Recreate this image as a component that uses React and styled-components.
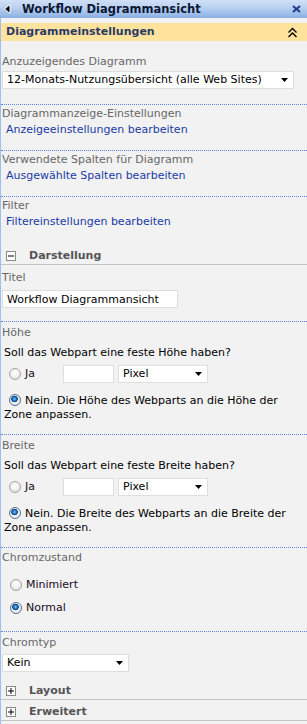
import styled, { createGlobalStyle } from 'styled-components';

const GlobalStyle = createGlobalStyle`
  html, body {
    margin: 0;
    padding: 0;
    background: #f2f2f2;
  }
  body {
    font-family: "DejaVu Sans", Verdana, sans-serif;
    font-size: 11px;
  }
`;

function ArrowDown() {
  return (
    <svg width="7" height="4" viewBox="0 0 7 4">
      <polygon points="0,0 7,0 3.5,4" fill="#000" />
    </svg>
  );
}

function Select({ value, width, inRow }) {
  return (
    <SelectBox $width={width} $inRow={inRow}>
      <span>{value}</span>
      <ArrowDown />
    </SelectBox>
  );
}

function Radio({ checked, children }) {
  return (
    <RadioLabel>
      <RadioDot $checked={checked} />
      {children}
    </RadioLabel>
  );
}

function Toggle({ open }) {
  return (
    <ToggleBox>
      <svg width="8" height="8" viewBox="0 0 8 8">
        <rect x="1" y="3.5" width="6" height="1" fill="#000" />
        {!open && <rect x="3.5" y="1" width="1" height="6" fill="#000" />}
      </svg>
    </ToggleBox>
  );
}

function SizeBlock({ label, question, what }) {
  return (
    <SizeSection>
      <Label>{label}</Label>
      <Question>{question}</Question>
      <FixedRow>
        <Radio>Ja</Radio>
        <TextInput $width={51} $inRow />
        <Select value="Pixel" width={90} inRow />
      </FixedRow>
      <AutoText>
        <RadioDot $checked />
        {`Nein. Die ${what} des Webparts an die ${what} der Zone anpassen.`}
      </AutoText>
    </SizeSection>
  );
}

export default function App() {
  return (
    <>
      <GlobalStyle />
      <Panel>
        <TitleBar>
          <svg width="7" height="10" viewBox="0 0 7 10">
            <polygon points="6.5,0 6.5,10 0,5" fill="#fff" />
            <polygon points="5.5,1.5 5.5,8.5 1.2,5" fill="#000" />
          </svg>
          <TitleText>Workflow Diagrammansicht</TitleText>
          <svg width="9" height="8" viewBox="0 0 9 8">
            <path d="M1 1 L8 7 M8 1 L1 7" stroke="#1f3f8f" strokeWidth="2.2" />
          </svg>
        </TitleBar>

        <CategoryHeader>
          <span>Diagrammeinstellungen</span>
          <svg width="11" height="11" viewBox="0 0 11 11">
            <path d="M1.5 5.5 L5.5 1.5 L9.5 5.5 M1.5 10 L5.5 6 L9.5 10" stroke="#000" strokeWidth="1.3" fill="none" />
          </svg>
        </CategoryHeader>

        <Section $pt={14} $pb={15}>
          <Label>Anzuzeigendes Diagramm</Label>
          <Spacer $h={2} />
          <Select value="12-Monats-Nutzungsübersicht (alle Web Sites)" width={292} />
        </Section>

        <Section>
          <Label>Diagrammanzeige-Einstellungen</Label>
          <Link href="#">Anzeigeeinstellungen bearbeiten</Link>
        </Section>

        <Section>
          <Label>Verwendete Spalten für Diagramm</Label>
          <Link href="#">Ausgewählte Spalten bearbeiten</Link>
        </Section>

        <Section $pb={15} $plain>
          <Label>Filter</Label>
          <Link href="#">Filtereinstellungen bearbeiten</Link>
        </Section>

        <GroupHeader>
          <Toggle open />
          Darstellung
        </GroupHeader>

        <Section $pt={6} $pb={13}>
          <Label>Titel</Label>
          <Spacer $h={5} />
          <TextInput $width={176} value="Workflow Diagrammansicht" readOnly />
        </Section>

        <SizeBlock label="Höhe" question="Soll das Webpart eine feste Höhe haben?" what="Höhe" />
        <SizeBlock label="Breite" question="Soll das Webpart eine feste Breite haben?" what="Breite" />

        <Section $pt={3} $pb={16}>
          <Label>Chromzustand</Label>
          <ChoiceList>
            <Radio>Minimiert</Radio>
            <Radio checked>Normal</Radio>
          </ChoiceList>
        </Section>

        <Section $pt={4} $pb={7} $plain>
          <Label>Chromtyp</Label>
          <Spacer $h={4} />
          <Select value="Kein" width={127} />
        </Section>

        <GroupHeader>
          <Toggle />
          Layout
        </GroupHeader>
        <GroupHeader>
          <Toggle />
          Erweitert
        </GroupHeader>
      </Panel>
    </>
  );
}

const Panel = styled.div`
  width: 306px;
  min-height: 724px;
  background: #f2f2f2;
  border-left: 1px solid #9cc0ee;
  color: #000;
`;

const TitleBar = styled.div`
  height: 18px;
  display: flex;
  align-items: center;
  padding: 0 6px 0 4px;
  margin-left: -1px;
  background: linear-gradient(#d0e0f6, #bcd2f1 40%, #8ab0e3);
  svg {
    flex: none;
  }
`;

const TitleText = styled.div`
  flex: 1;
  margin-left: 11px;
  font-weight: bold;
  font-size: 11.5px;
  color: #0c1833;
  line-height: 18px;
`;

const CategoryHeader = styled.div`
  margin-top: 5px;
  height: 18px;
  display: flex;
  align-items: center;
  justify-content: space-between;
  padding: 0 9px 0 5px;
  background: #fee39c;
  font-weight: bold;
  color: #2b3a66;
  line-height: 18px;
`;

const Section = styled.div`
  padding: ${(p) => p.$pt ?? 2}px 0 ${(p) => p.$pb ?? 13}px;
  border-bottom: ${(p) => (p.$plain ? 'none' : '1px dotted #5f82d4')};
`;

const SizeSection = styled(Section).attrs({ $pt: 4, $pb: 12 })``;

const Label = styled.div`
  padding-left: 1px;
  line-height: 14px;
  color: #676767;
`;

const Link = styled.a`
  display: block;
  margin-top: 2px;
  padding-left: 5px;
  line-height: 14px;
  color: #1a3aa6;
  text-decoration: none;
`;

const Spacer = styled.div`
  height: ${(p) => p.$h}px;
`;

const SelectBox = styled.div`
  box-sizing: border-box;
  width: ${(p) => p.$width}px;
  height: 18px;
  margin-left: ${(p) => (p.$inRow ? 0 : 1)}px;
  display: flex;
  align-items: center;
  justify-content: space-between;
  padding: 0 5px 0 4px;
  background: #fff;
  border: 1px solid #dedede;
  line-height: 16px;
  white-space: nowrap;
  flex: none;
`;

const TextInput = styled.input`
  box-sizing: border-box;
  width: ${(p) => p.$width}px;
  height: 18px;
  margin: 0 0 0 ${(p) => (p.$inRow ? 0 : 1)}px;
  padding: 0 4px;
  border: 1px solid #dedede;
  background: #fff;
  font: inherit;
  color: #000;
  outline: none;
  flex: none;
`;

const Question = styled.div`
  margin-top: 6px;
  padding-left: 3px;
  line-height: 14px;
`;

const FixedRow = styled.div`
  margin-top: 4px;
  height: 19px;
  display: flex;
  align-items: center;
  gap: 4px;
  & > label {
    width: 50px;
  }
`;

const RadioLabel = styled.label`
  display: flex;
  align-items: center;
  padding-left: 8px;
  line-height: 14px;
  font-weight: normal;
  color: #1a0a24;
`;

const RadioDot = styled.span`
  display: inline-block;
  box-sizing: border-box;
  width: 12px;
  height: 12px;
  margin-right: 4px;
  border-radius: 50%;
  border: 1px solid ${(p) => (p.$checked ? '#4f6f94' : '#a3a3a3')};
  vertical-align: -2px;
  flex: none;
  background: ${(p) =>
    p.$checked
      ? 'radial-gradient(circle at 45% 40%, #7cc4ff 0, #2a86d6 1.5px, #0b3f7c 3px, #f2f2f2 3.6px, #e6e6e6 100%)'
      : 'radial-gradient(circle at 50% 40%, #ffffff 0, #f4f4f4 40%, #d6d6d6 100%)'};
`;

const AutoText = styled.div`
  margin-top: 11px;
  padding: 0 10px 0 3px;
  line-height: 14px;
  & > span {
    margin-left: 5px;
  }
`;

const ChoiceList = styled.div`
  margin-top: 13px;
  display: flex;
  flex-direction: column;
  gap: 9px;
  & > label {
    padding-left: 9px;
  }
`;

const GroupHeader = styled.div`
  display: flex;
  align-items: center;
  padding: 5px 0 1px 5px;
  line-height: 14px;
  font-weight: bold;
  color: #555;
  border-bottom: 1px solid #c4c4c4;
`;

const ToggleBox = styled.span`
  box-sizing: border-box;
  width: 10px;
  height: 10px;
  margin-right: 13px;
  display: flex;
  align-items: center;
  justify-content: center;
  border: 1px solid #8a8a8a;
  background: #fff;
  svg {
    display: block;
  }
`;
